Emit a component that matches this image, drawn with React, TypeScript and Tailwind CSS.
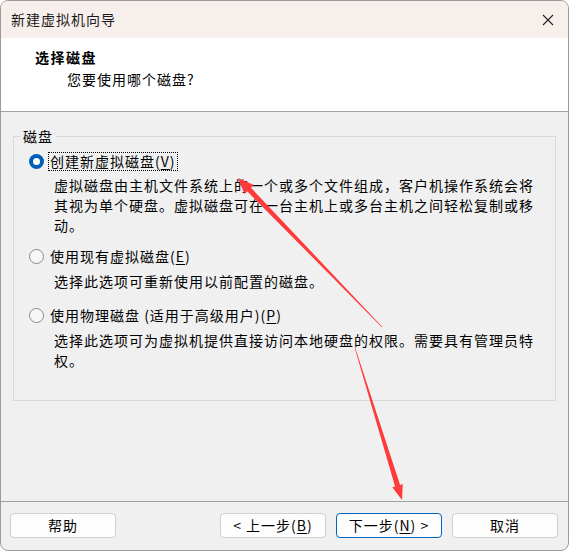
import React from 'react'

const font = { fontFamily: '"Noto Sans CJK SC", "Liberation Sans", sans-serif' }

type Pt = [number, number]

// tapered red annotation arrow, thin at the tail, thick near the head
function arrowPoints(tail: Pt, tip: Pt, headLen: number, headHalf: number, shaftHalf: number) {
  const dx = tip[0] - tail[0]
  const dy = tip[1] - tail[1]
  const len = Math.hypot(dx, dy)
  const ux = dx / len
  const uy = dy / len
  const nx = -uy
  const ny = ux
  const bx = tip[0] - ux * headLen
  const by = tip[1] - uy * headLen
  const pts: Pt[] = [
    [tail[0] + nx * 0.3, tail[1] + ny * 0.3],
    [bx + nx * shaftHalf, by + ny * shaftHalf],
    [bx + nx * headHalf, by + ny * headHalf],
    tip,
    [bx - nx * headHalf, by - ny * headHalf],
    [bx - nx * shaftHalf, by - ny * shaftHalf],
    [tail[0] - nx * 0.3, tail[1] - ny * 0.3],
  ]
  return pts.map(p => `${p[0].toFixed(1)},${p[1].toFixed(1)}`).join(' ')
}

function Radio({ checked }: { checked?: boolean }) {
  if (checked) {
    return (
      <span className="w-[15px] h-[15px] rounded-full bg-[#005fb8] flex items-center justify-center shrink-0">
        <span className="w-[7px] h-[7px] rounded-full bg-white" />
      </span>
    )
  }
  return <span className="w-[15px] h-[15px] rounded-full border border-[#8a8a8a] bg-[#f7f7f7] shrink-0" />
}

function Btn({ children, primary }: { children: React.ReactNode; primary?: boolean }) {
  return (
    <button
      className={
        'w-[106px] h-[25px] rounded-[4px] bg-[#fdfdfd] text-[14px] tracking-[1px] text-black flex items-center justify-center border ' +
        (primary ? 'border-[#0067c0]' : 'border-[#d0d0d0]')
      }
    >
      {children}
    </button>
  )
}

export default function App() {
  return (
    <div className="w-[570px] h-[551px] bg-white relative overflow-hidden" style={font}>
      <div className="w-[569px] h-[551px] rounded-[8px] border border-[#9a9a9a] overflow-hidden flex flex-col bg-[#f0f0f0]">
        {/* Title bar */}
        <div className="h-[37px] bg-[#f7efec] flex items-center justify-between pl-[10px] pr-[14px] shrink-0">
          <span className="text-[14px] tracking-[1px] text-[#1a1a1a]">新建虚拟机向导</span>
          <svg width="12" height="12" viewBox="0 0 12 12" stroke="#222" strokeWidth="1.1">
            <path d="M1 1l10 10M11 1L1 11" />
          </svg>
        </div>

        {/* Header */}
        <div className="h-[74px] bg-white border-b border-[#a0a0a0] shrink-0 pl-[34px] pt-[8px]">
          <div className="text-[14px] tracking-[1.5px] font-bold leading-[22px] text-black">选择磁盘</div>
          <div className="text-[14px] tracking-[1px] leading-[22px] text-black pl-[32px]">您要使用哪个磁盘?</div>
        </div>

        {/* Body */}
        <div className="flex-1 px-[12px] pt-[15px]">
          <fieldset className="border border-[#d9d9d9] h-[274px] px-[15px]">
            <legend className="-ml-[9px] px-[3px] text-[14px] tracking-[1px] leading-[18px] text-black">磁盘</legend>

            <div className="flex items-center h-[20px] mt-[6px]">
              <Radio checked />
              <span className="ml-[4px] border border-dotted border-black px-[1px] h-[19px] flex items-center text-[14px] tracking-[1px] text-black">
                创建新虚拟磁盘(<span className="underline underline-offset-2">V</span>)
              </span>
            </div>
            <div className="pl-[25px] mt-[4px] text-[14px] tracking-[1px] leading-[20px] text-black">
              <div>虚拟磁盘由主机文件系统上的一个或多个文件组成，客户机操作系统会将</div>
              <div>其视为单个硬盘。虚拟磁盘可在一台主机上或多台主机之间轻松复制或移</div>
              <div>动。</div>
            </div>

            <div className="flex items-center h-[20px] mt-[11px]">
              <Radio />
              <span className="ml-[6px] text-[14px] tracking-[1px] text-black">
                使用现有虚拟磁盘(<span className="underline underline-offset-2">E</span>)
              </span>
            </div>
            <div className="pl-[25px] mt-[5px] text-[14px] tracking-[1px] leading-[20px] text-black">
              选择此选项可重新使用以前配置的磁盘。
            </div>

            <div className="flex items-center h-[20px] mt-[14px]">
              <Radio />
              <span className="ml-[6px] text-[14px] tracking-[1px] text-black">
                使用物理磁盘 (适用于高级用户)(<span className="underline underline-offset-2">P</span>)
              </span>
            </div>
            <div className="pl-[25px] mt-[5px] text-[14px] tracking-[1px] leading-[20px] text-black">
              <div>选择此选项可为虚拟机提供直接访问本地硬盘的权限。需要具有管理员特</div>
              <div>权。</div>
            </div>
          </fieldset>
        </div>

        {/* Footer */}
        <div className="h-[49px] border-t border-[#a0a0a0] shrink-0 flex items-start pt-[11px] pl-[9px] pr-[10px]">
          <Btn>帮助</Btn>
          <div className="flex-1" />
          <div className="flex gap-[10px]">
            <Btn>&lt; 上一步(<span className="underline underline-offset-2">B</span>)</Btn>
            <Btn primary>下一步(<span className="underline underline-offset-2">N</span>) &gt;</Btn>
            <Btn>取消</Btn>
          </div>
        </div>
      </div>

      {/* Annotation arrows */}
      <svg className="absolute inset-0 pointer-events-none" width="570" height="551">
        <polygon points={arrowPoints([382, 327], [238, 178], 16, 6.5, 2.6)} fill="#ff3a3a" />
        <polygon points={arrowPoints([355, 348], [402, 500], 15, 5.5, 2.6)} fill="#ff3a3a" />
      </svg>
    </div>
  )
}
